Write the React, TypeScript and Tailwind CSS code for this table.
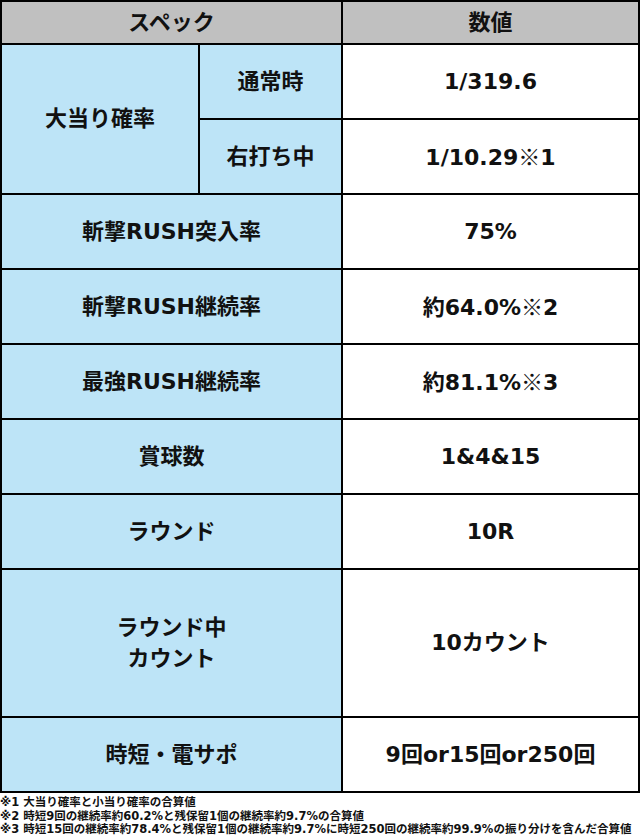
import React from "react";

const font = { fontFamily: '"DejaVu Sans", "Noto Sans CJK JP", sans-serif' };
const cjk = { fontFamily: '"Noto Sans CJK JP", sans-serif' };

function Label({ children, className = "" }: { children: React.ReactNode; className?: string }) {
  return (
    <div className={`bg-[#bde4f7] flex items-center justify-center text-center ${className}`}>
      {children}
    </div>
  );
}

function Value({ children, className = "" }: { children: React.ReactNode; className?: string }) {
  return (
    <div className={`bg-white flex items-center justify-center text-center ${className}`}>
      {children}
    </div>
  );
}

function Mark() {
  return (
    <span className="inline-block leading-none" style={cjk}>
      ※
    </span>
  );
}

export default function App() {
  return (
    <div className="w-[640px] h-[836px] bg-white text-[#111]" style={font}>
      <div className="grid grid-cols-[196px_141px_295px] grid-rows-[41px_73px_73px_73px_73px_73px_73px_73px_146px_73px] gap-[2px] bg-black border-2 border-black text-[22px] font-bold leading-none">
        <div className="col-span-2 bg-[#c0c0c0] flex items-center justify-center">スペック</div>
        <div className="bg-[#c0c0c0] flex items-center justify-center">数値</div>

        <Label className="row-span-2">大当り確率</Label>
        <Label>通常時</Label>
        <Value>1/319.6</Value>
        <Label>右打ち中</Label>
        <Value>
          <span>
            1/10.29<Mark />1
          </span>
        </Value>

        <Label className="col-span-2">斬撃RUSH突入率</Label>
        <Value>75%</Value>

        <Label className="col-span-2">斬撃RUSH継続率</Label>
        <Value>
          <span>
            約64.0%<Mark />2
          </span>
        </Value>

        <Label className="col-span-2">最強RUSH継続率</Label>
        <Value>
          <span>
            約81.1%<Mark />3
          </span>
        </Value>

        <Label className="col-span-2">賞球数</Label>
        <Value>1&amp;4&amp;15</Value>

        <Label className="col-span-2">ラウンド</Label>
        <Value>10R</Value>

        <Label className="col-span-2 leading-[31px]">
          ラウンド中
          <br />
          カウント
        </Label>
        <Value>10カウント</Value>

        <Label className="col-span-2">時短・電サポ</Label>
        <Value>9回or15回or250回</Value>
      </div>
      <div className="pt-[3px] text-[11.5px] font-bold leading-[13.5px] whitespace-nowrap">
        <div className="h-[13.5px]">※1 大当り確率と小当り確率の合算値</div>
        <div className="h-[13.5px]">※2 時短9回の継続率約60.2%と残保留1個の継続率約9.7%の合算値</div>
        <div className="h-[13.5px]">※3 時短15回の継続率約78.4%と残保留1個の継続率約9.7%に時短250回の継続率約99.9%の振り分けを含んだ合算値</div>
      </div>
    </div>
  );
}
